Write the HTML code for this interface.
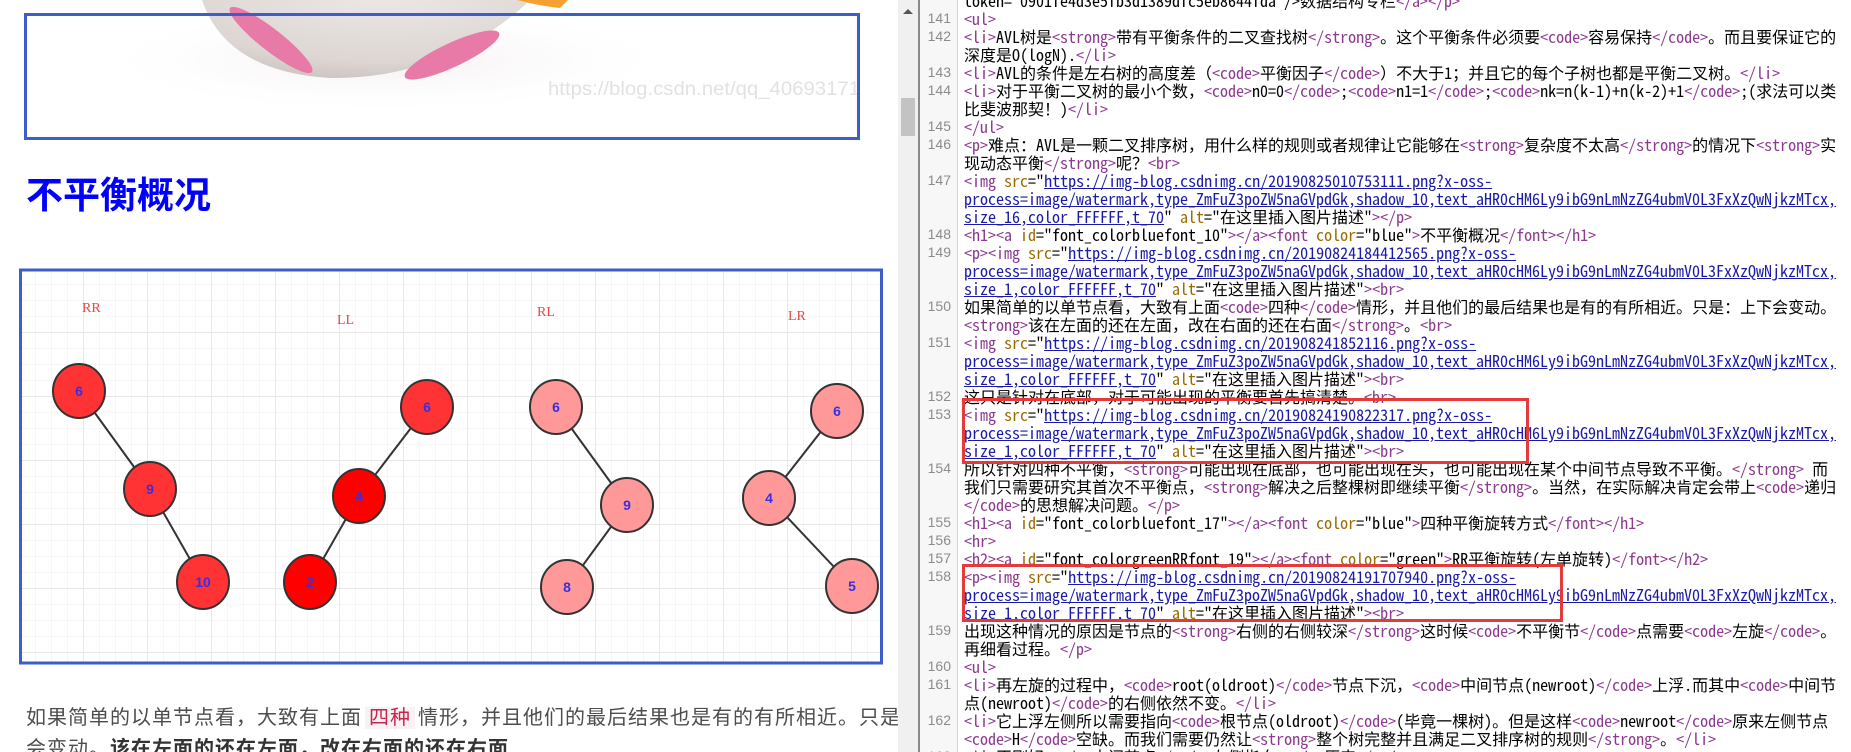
<!DOCTYPE html>
<html><head><meta charset="utf-8">
<style>
html,body{margin:0;padding:0;width:1851px;height:752px;overflow:hidden;background:#fff;position:relative}
#left{position:absolute;left:0;top:0;width:898px;height:752px;overflow:hidden;background:#fff}
#h1{position:absolute;left:26px;top:175px;font:bold 37px/42px "Liberation Sans","Noto Sans CJK SC",sans-serif;color:#0000ff;margin:0}
#para{position:absolute;left:26px;top:703px;width:900px;font:20px/31px "Liberation Sans","Noto Sans CJK SC",sans-serif;color:#4d4d4d;letter-spacing:1px;white-space:nowrap}
#para code{font:inherit;color:#c7254e;background:#f9f2f4;padding:0 4px;margin:0 3px;letter-spacing:1px}
#sb{position:absolute;left:898px;top:0;width:20px;height:752px;background:#f0f0f0}
#sb .th{position:absolute;left:3px;top:98px;width:14px;height:38px;background:#c3c3c3}
#sb .ar{position:absolute;left:5px;top:9px;width:0;height:0;border-left:5px solid transparent;border-right:5px solid transparent;border-bottom:5px solid #555}
#bl{position:absolute;left:918px;top:0;width:2px;height:752px;background:#8a8a8a}
#gut{position:absolute;left:920px;top:0;width:37px;height:752px;background:#f7f7f7;border-right:1px solid #d6d6d6}
#code{position:absolute;left:920px;top:0;width:931px;height:752px;overflow:hidden}
.r{position:absolute;left:0;height:18px;width:2000px;white-space:pre;font:16px/18px "Noto Sans Mono CJK SC","Liberation Mono","Noto Sans CJK SC",monospace;color:#000}
.r .n{position:absolute;left:0;width:31px;text-align:right;color:#8c8c8c;font:14px/18px "Liberation Sans",sans-serif}
.r .c{position:absolute;left:44px}
.g{color:#8b3a8f}
.b{color:#9a6a00}
.u{color:#1a1aa6;text-decoration:underline}
.rb{position:absolute;border:3px solid #e43a3a;box-sizing:border-box}
</style></head><body>
<div id="left">
<svg width="898" height="752" style="position:absolute;left:0;top:0">
<defs>
<radialGradient id="eg" cx="0.5" cy="0.3" r="0.7">
<stop offset="0" stop-color="#ece8e6"/><stop offset="0.8" stop-color="#ddd6d3"/><stop offset="1" stop-color="#cfc7c4"/>
</radialGradient>
<radialGradient id="sh" cx="0.5" cy="0.5" r="0.5">
<stop offset="0" stop-color="#f3eeee"/><stop offset="1" stop-color="#fff" stop-opacity="0"/>
</radialGradient>
<pattern id="minor" width="16" height="16" patternUnits="userSpaceOnUse" x="20" y="269">
<path d="M16 0V16M0 16H16" fill="none" stroke="#ececec" stroke-width="1"/>
</pattern>
<pattern id="major" width="64" height="64" patternUnits="userSpaceOnUse" x="20" y="269">
<path d="M64 0V64M0 64H64" fill="none" stroke="#e0e0e0" stroke-width="1.5"/>
</pattern>
</defs>
<ellipse cx="385" cy="60" rx="300" ry="55" fill="url(#sh)"/>
<path d="M195 -40 Q200 70 330 78 Q470 80 568 -40 Z" fill="url(#eg)"/>
<path d="M517 0 L568 0 L560 8 Q540 6 517 0Z" fill="#f5a030"/>
<ellipse cx="271" cy="40" rx="52" ry="11" transform="rotate(38 271 40)" fill="#e87aa8"/>
<ellipse cx="452" cy="55" rx="52" ry="12" transform="rotate(-25 452 55)" fill="#e87aa8"/>
<text x="548" y="95" font-family="Liberation Sans,sans-serif" font-size="19" fill="#e2e2e2" textLength="312" lengthAdjust="spacingAndGlyphs">https://blog.csdn.net/qq_40693171</text>
<rect x="25.5" y="14.5" width="833" height="124" fill="none" stroke="#3d5ec8" stroke-width="3"/>
<rect x="20" y="269" width="862" height="395" fill="#fff"/>
<rect x="20" y="269" width="862" height="395" fill="url(#minor)"/>
<rect x="20" y="269" width="862" height="395" fill="url(#major)"/>
<rect x="20.5" y="270" width="861" height="393" fill="none" stroke="#3d5ec8" stroke-width="3"/>
<g font-family="Liberation Serif,serif" font-size="14" fill="#e84646">
<text x="82" y="312">RR</text><text x="337" y="324">LL</text><text x="537" y="316">RL</text><text x="788" y="320">LR</text>
</g>
<g stroke="#333" stroke-width="2">
<line x1="79" y1="391" x2="150" y2="489"/><line x1="150" y1="489" x2="203" y2="582"/>
<line x1="427" y1="407" x2="359" y2="496"/><line x1="359" y1="496" x2="310" y2="582"/>
<line x1="556" y1="407" x2="627" y2="505"/><line x1="627" y1="505" x2="567" y2="587"/>
<line x1="837" y1="411" x2="769" y2="498"/><line x1="769" y1="498" x2="852" y2="586"/>
</g>
<g stroke="#333" stroke-width="2">
<ellipse cx="79" cy="391" rx="26" ry="27" fill="#ff3333"/>
<ellipse cx="150" cy="489" rx="26" ry="27" fill="#ff3333"/>
<ellipse cx="203" cy="582" rx="26" ry="27" fill="#ff3333"/>
<ellipse cx="427" cy="407" rx="26" ry="27" fill="#ff3333"/>
<ellipse cx="359" cy="496" rx="26" ry="27" fill="#ff0000"/>
<ellipse cx="310" cy="582" rx="26" ry="27" fill="#ff0000"/>
<ellipse cx="556" cy="407" rx="26" ry="27" fill="#ff9999"/>
<ellipse cx="627" cy="505" rx="26" ry="27" fill="#ff9999"/>
<ellipse cx="567" cy="587" rx="26" ry="27" fill="#ff9999"/>
<ellipse cx="837" cy="411" rx="26" ry="27" fill="#ff9999"/>
<ellipse cx="769" cy="498" rx="26" ry="27" fill="#ff9999"/>
<ellipse cx="852" cy="586" rx="26" ry="27" fill="#ff9999"/>
</g>
<g font-family="Liberation Sans,sans-serif" font-size="14" font-weight="bold" fill="#3a2ee0" text-anchor="middle">
<text x="79" y="396">6</text><text x="150" y="494">9</text><text x="203" y="587">10</text>
<text x="427" y="412">6</text><text x="359" y="501">4</text><text x="310" y="587">2</text>
<text x="556" y="412">6</text><text x="627" y="510">9</text><text x="567" y="592">8</text>
<text x="837" y="416">6</text><text x="769" y="503">4</text><text x="852" y="591">5</text>
</g>
</svg>
<div id="h1">不平衡概况</div>
<div id="para">如果简单的以单节点看，大致有上面<code>四种</code>情形，并且他们的最后结果也是有的有所相近。只是：上下<br>会变动。<b style="color:#333">该在左面的还在左面，改在右面的还在右面</b></div>
</div>
<div id="sb"><div class="ar"></div><div class="th"></div></div>
<div id="gut"></div>
<div id="bl"></div>
<div id="code">
<div class="r" style="top:-9px"><span class="c">token="0901fe4d3e5fb3d1389dfc5eb8644fda"/&gt;数据结构专栏<span class="g">&lt;/a&gt;&lt;/p&gt;</span></span></div>
<div class="r" style="top:9px"><span class="n">141</span><span class="c"><span class="g">&lt;ul&gt;</span></span></div>
<div class="r" style="top:27px"><span class="n">142</span><span class="c"><span class="g">&lt;li&gt;</span>AVL树是<span class="g">&lt;strong&gt;</span>带有平衡条件的二叉查找树<span class="g">&lt;/strong&gt;</span>。这个平衡条件必须要<span class="g">&lt;code&gt;</span>容易保持<span class="g">&lt;/code&gt;</span>。而且要保证它的</span></div>
<div class="r" style="top:45px"><span class="c">深度是O(logN).<span class="g">&lt;/li&gt;</span></span></div>
<div class="r" style="top:63px"><span class="n">143</span><span class="c"><span class="g">&lt;li&gt;</span>AVL的条件是左右树的高度差（<span class="g">&lt;code&gt;</span>平衡因子<span class="g">&lt;/code&gt;</span>）不大于1；并且它的每个子树也都是平衡二叉树。<span class="g">&lt;/li&gt;</span></span></div>
<div class="r" style="top:81px"><span class="n">144</span><span class="c"><span class="g">&lt;li&gt;</span>对于平衡二叉树的最小个数，<span class="g">&lt;code&gt;</span>n0=0<span class="g">&lt;/code&gt;</span>;<span class="g">&lt;code&gt;</span>n1=1<span class="g">&lt;/code&gt;</span>;<span class="g">&lt;code&gt;</span>nk=n(k-1)+n(k-2)+1<span class="g">&lt;/code&gt;</span>;(求法可以类</span></div>
<div class="r" style="top:99px"><span class="c">比斐波那契！)<span class="g">&lt;/li&gt;</span></span></div>
<div class="r" style="top:117px"><span class="n">145</span><span class="c"><span class="g">&lt;/ul&gt;</span></span></div>
<div class="r" style="top:135px"><span class="n">146</span><span class="c"><span class="g">&lt;p&gt;</span>难点：AVL是一颗二叉排序树，用什么样的规则或者规律让它能够在<span class="g">&lt;strong&gt;</span>复杂度不太高<span class="g">&lt;/strong&gt;</span>的情况下<span class="g">&lt;strong&gt;</span>实</span></div>
<div class="r" style="top:153px"><span class="c">现动态平衡<span class="g">&lt;/strong&gt;</span>呢？<span class="g">&lt;br&gt;</span></span></div>
<div class="r" style="top:171px"><span class="n">147</span><span class="c"><span class="g">&lt;img</span> <span class="b">src</span>="<span class="u">https://img-blog.csdnimg.cn/20190825010753111.png?x-oss-</span></span></div>
<div class="r" style="top:189px"><span class="c"><span class="u">process=image/watermark,type_ZmFuZ3poZW5naGVpdGk,shadow_10,text_aHR0cHM6Ly9ibG9nLmNzZG4ubmV0L3FxXzQwNjkzMTcx,</span></span></div>
<div class="r" style="top:207px"><span class="c"><span class="u">size_16,color_FFFFFF,t_70</span>" <span class="b">alt</span>="在这里插入图片描述"<span class="g">&gt;&lt;/p&gt;</span></span></div>
<div class="r" style="top:225px"><span class="n">148</span><span class="c"><span class="g">&lt;h1&gt;&lt;a</span> <span class="b">id</span>="font_colorbluefont_10"<span class="g">&gt;&lt;/a&gt;&lt;font</span> <span class="b">color</span>="blue"<span class="g">&gt;</span>不平衡概况<span class="g">&lt;/font&gt;&lt;/h1&gt;</span></span></div>
<div class="r" style="top:243px"><span class="n">149</span><span class="c"><span class="g">&lt;p&gt;&lt;img</span> <span class="b">src</span>="<span class="u">https://img-blog.csdnimg.cn/20190824184412565.png?x-oss-</span></span></div>
<div class="r" style="top:261px"><span class="c"><span class="u">process=image/watermark,type_ZmFuZ3poZW5naGVpdGk,shadow_10,text_aHR0cHM6Ly9ibG9nLmNzZG4ubmV0L3FxXzQwNjkzMTcx,</span></span></div>
<div class="r" style="top:279px"><span class="c"><span class="u">size_1,color_FFFFFF,t_70</span>" <span class="b">alt</span>="在这里插入图片描述"<span class="g">&gt;&lt;br&gt;</span></span></div>
<div class="r" style="top:297px"><span class="n">150</span><span class="c">如果简单的以单节点看，大致有上面<span class="g">&lt;code&gt;</span>四种<span class="g">&lt;/code&gt;</span>情形，并且他们的最后结果也是有的有所相近。只是：上下会变动。</span></div>
<div class="r" style="top:315px"><span class="c"><span class="g">&lt;strong&gt;</span>该在左面的还在左面，改在右面的还在右面<span class="g">&lt;/strong&gt;</span>。<span class="g">&lt;br&gt;</span></span></div>
<div class="r" style="top:333px"><span class="n">151</span><span class="c"><span class="g">&lt;img</span> <span class="b">src</span>="<span class="u">https://img-blog.csdnimg.cn/201908241852116.png?x-oss-</span></span></div>
<div class="r" style="top:351px"><span class="c"><span class="u">process=image/watermark,type_ZmFuZ3poZW5naGVpdGk,shadow_10,text_aHR0cHM6Ly9ibG9nLmNzZG4ubmV0L3FxXzQwNjkzMTcx,</span></span></div>
<div class="r" style="top:369px"><span class="c"><span class="u">size_1,color_FFFFFF,t_70</span>" <span class="b">alt</span>="在这里插入图片描述"<span class="g">&gt;&lt;br&gt;</span></span></div>
<div class="r" style="top:387px"><span class="n">152</span><span class="c">这只是针对在底部，对于可能出现的平衡要首先搞清楚。<span class="g">&lt;br&gt;</span></span></div>
<div class="r" style="top:405px"><span class="n">153</span><span class="c"><span class="g">&lt;img</span> <span class="b">src</span>="<span class="u">https://img-blog.csdnimg.cn/20190824190822317.png?x-oss-</span></span></div>
<div class="r" style="top:423px"><span class="c"><span class="u">process=image/watermark,type_ZmFuZ3poZW5naGVpdGk,shadow_10,text_aHR0cHM6Ly9ibG9nLmNzZG4ubmV0L3FxXzQwNjkzMTcx,</span></span></div>
<div class="r" style="top:441px"><span class="c"><span class="u">size_1,color_FFFFFF,t_70</span>" <span class="b">alt</span>="在这里插入图片描述"<span class="g">&gt;&lt;br&gt;</span></span></div>
<div class="r" style="top:459px"><span class="n">154</span><span class="c">所以针对四种不平衡，<span class="g">&lt;strong&gt;</span>可能出现在底部，也可能出现在头，也可能出现在某个中间节点导致不平衡。<span class="g">&lt;/strong&gt;</span> 而</span></div>
<div class="r" style="top:477px"><span class="c">我们只需要研究其首次不平衡点，<span class="g">&lt;strong&gt;</span>解决之后整棵树即继续平衡<span class="g">&lt;/strong&gt;</span>。当然，在实际解决肯定会带上<span class="g">&lt;code&gt;</span>递归</span></div>
<div class="r" style="top:495px"><span class="c"><span class="g">&lt;/code&gt;</span>的思想解决问题。<span class="g">&lt;/p&gt;</span></span></div>
<div class="r" style="top:513px"><span class="n">155</span><span class="c"><span class="g">&lt;h1&gt;&lt;a</span> <span class="b">id</span>="font_colorbluefont_17"<span class="g">&gt;&lt;/a&gt;&lt;font</span> <span class="b">color</span>="blue"<span class="g">&gt;</span>四种平衡旋转方式<span class="g">&lt;/font&gt;&lt;/h1&gt;</span></span></div>
<div class="r" style="top:531px"><span class="n">156</span><span class="c"><span class="g">&lt;hr&gt;</span></span></div>
<div class="r" style="top:549px"><span class="n">157</span><span class="c"><span class="g">&lt;h2&gt;&lt;a</span> <span class="b">id</span>="font_colorgreenRRfont_19"<span class="g">&gt;&lt;/a&gt;&lt;font</span> <span class="b">color</span>="green"<span class="g">&gt;</span>RR平衡旋转(左单旋转)<span class="g">&lt;/font&gt;&lt;/h2&gt;</span></span></div>
<div class="r" style="top:567px"><span class="n">158</span><span class="c"><span class="g">&lt;p&gt;&lt;img</span> <span class="b">src</span>="<span class="u">https://img-blog.csdnimg.cn/20190824191707940.png?x-oss-</span></span></div>
<div class="r" style="top:585px"><span class="c"><span class="u">process=image/watermark,type_ZmFuZ3poZW5naGVpdGk,shadow_10,text_aHR0cHM6Ly9ibG9nLmNzZG4ubmV0L3FxXzQwNjkzMTcx,</span></span></div>
<div class="r" style="top:603px"><span class="c"><span class="u">size_1,color_FFFFFF,t_70</span>" <span class="b">alt</span>="在这里插入图片描述"<span class="g">&gt;&lt;br&gt;</span></span></div>
<div class="r" style="top:621px"><span class="n">159</span><span class="c">出现这种情况的原因是节点的<span class="g">&lt;strong&gt;</span>右侧的右侧较深<span class="g">&lt;/strong&gt;</span>这时候<span class="g">&lt;code&gt;</span>不平衡节<span class="g">&lt;/code&gt;</span>点需要<span class="g">&lt;code&gt;</span>左旋<span class="g">&lt;/code&gt;</span>。</span></div>
<div class="r" style="top:639px"><span class="c">再细看过程。<span class="g">&lt;/p&gt;</span></span></div>
<div class="r" style="top:657px"><span class="n">160</span><span class="c"><span class="g">&lt;ul&gt;</span></span></div>
<div class="r" style="top:675px"><span class="n">161</span><span class="c"><span class="g">&lt;li&gt;</span>再左旋的过程中，<span class="g">&lt;code&gt;</span>root(oldroot)<span class="g">&lt;/code&gt;</span>节点下沉，<span class="g">&lt;code&gt;</span>中间节点(newroot)<span class="g">&lt;/code&gt;</span>上浮.而其中<span class="g">&lt;code&gt;</span>中间节</span></div>
<div class="r" style="top:693px"><span class="c">点(newroot)<span class="g">&lt;/code&gt;</span>的右侧依然不变。<span class="g">&lt;/li&gt;</span></span></div>
<div class="r" style="top:711px"><span class="n">162</span><span class="c"><span class="g">&lt;li&gt;</span>它上浮左侧所以需要指向<span class="g">&lt;code&gt;</span>根节点(oldroot)<span class="g">&lt;/code&gt;</span>(毕竟一棵树)。但是这样<span class="g">&lt;code&gt;</span>newroot<span class="g">&lt;/code&gt;</span>原来左侧节点</span></div>
<div class="r" style="top:729px"><span class="c"><span class="g">&lt;code&gt;</span>H<span class="g">&lt;/code&gt;</span>空缺。而我们需要仍然让<span class="g">&lt;strong&gt;</span>整个树完整并且满足二叉排序树的规则<span class="g">&lt;/strong&gt;</span>。<span class="g">&lt;/li&gt;</span></span></div>
<div class="r" style="top:747px"><span class="n">163</span><span class="c"><span class="g">&lt;li&gt;</span>正刚好<span class="g">&lt;code&gt;</span>中间节点<span class="g">&lt;/code&gt;</span>左侧指向<span class="g">&lt;code&gt;</span>原来<span class="g">&lt;/code&gt;</span></span></div>
</div>
<div class="rb" style="left:962px;top:398px;width:567px;height:66px"></div>
<div class="rb" style="left:962px;top:564px;width:601px;height:58px"></div>
</body></html>
